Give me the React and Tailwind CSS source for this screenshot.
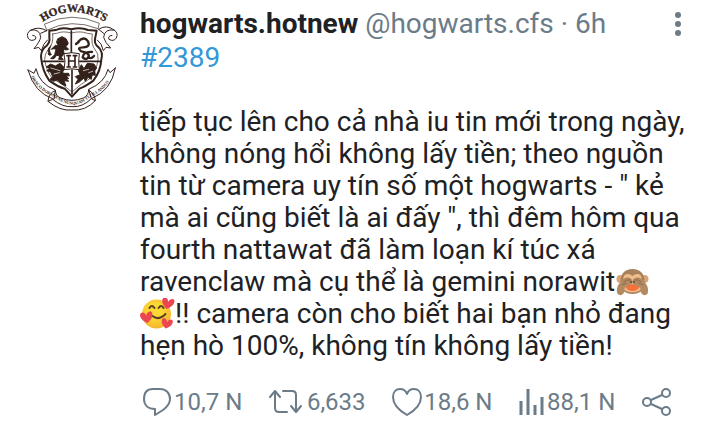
import React from 'react';

const Crest = () => (
  <svg
    viewBox="0 0 312 336"
    className="w-26 h-28 shrink-0"
    fill="none"
    stroke="#33221b"
    strokeWidth="3"
    strokeLinejoin="round"
    strokeLinecap="round"
    role="img"
    aria-label="Hogwarts crest"
  >
    <defs>
      <path id="crest-title" d="M68 66 Q155 6 256 66" />
      <path id="crest-motto" d="M33 230 Q52 270 100 290 Q128 312 156 314 Q186 314 212 290 Q264 268 284 214" />
    </defs>

    {/* name ribbon */}
    <text fill="#33221b" stroke="#33221b" strokeWidth="1" className="font-['Liberation_Serif',serif] text-[34px] font-bold">
      <textPath href="#crest-title">HOGWARTS</textPath>
    </text>
    <path d="M74 72 Q155 32 238 70 L234 86 Q154 54 82 90 Z" strokeWidth="2" />
    <path d="M80 92 Q56 78 33 90 Q18 98 24 114 Q32 126 46 118 Q52 108 38 106 M33 90 Q60 86 62 112 Q60 124 42 146 L56 142 L64 152 Q70 130 82 120 M62 100 L80 92" />
    <path d="M236 88 Q258 72 282 90 Q296 98 289 114 Q281 126 267 118 Q262 108 276 106 M282 90 Q253 86 251 112 Q254 126 272 144 L258 142 L250 152 Q246 130 232 120 M251 100 L236 88" />

    {/* shield */}
    <path d="M88 92 L108 90 Q126 80 154 88 Q182 80 204 90 L230 92 L226 112 Q220 130 236 142 Q250 156 244 178 Q242 214 220 242 Q196 260 178 266 L156 290 L134 266 Q112 260 88 242 Q68 214 64 178 Q60 156 74 142 Q92 130 88 112 Z" strokeWidth="6" />
    <path d="M98 102 L110 100 Q128 92 154 99 Q182 92 202 100 L217 102 Q212 134 226 150 Q236 160 234 178 Q230 212 211 235 Q184 250 156 276 Q126 250 97 235 Q78 212 74 178 Q74 160 84 150 Q102 130 98 102 Z" strokeWidth="2" />
    <path d="M154 93 V160 M156 210 V282 M69 184 H132 M178 184 H240" strokeWidth="5" />

    {/* lion */}
    <g fill="#33221b" strokeWidth="3">
      <path d="M114 116 L126 110 L138 116 L145 130 L138 140 L146 148 L137 150 L130 146 L132 160 L124 172 L130 178 L116 178 L119 168 L110 166 L102 176 L92 176 L104 164 L108 148 L102 146 L94 148 L106 136 L116 138 L110 128 Z" />
      <path d="M92 138 Q84 152 94 164 Q86 168 84 162 Q88 158 84 152 Q84 144 92 138 Z" />
    </g>
    {/* serpent */}
    <path d="M174 126 Q192 106 204 124 Q212 142 190 142 Q168 142 184 154 Q210 158 206 172 Q198 182 188 172 Q190 154 216 156 M168 132 L176 126 M204 172 Q214 178 222 168" strokeWidth="7" />
    {/* badger */}
    <g fill="#33221b" strokeWidth="3">
      <path d="M80 200 L92 192 L106 198 L120 190 L134 204 L128 216 L134 230 L146 244 L132 242 L138 258 L124 252 L112 240 L100 244 L90 238 L98 230 L92 216 L80 212 L88 206 Z" />
      <path d="M126 220 L146 220 L148 228 L138 226 L146 236 L134 234 Z" />
    </g>
    {/* eagle */}
    <g fill="#33221b" strokeWidth="3">
      <path d="M176 212 L184 194 L192 206 L202 190 L222 192 L230 204 L224 212 L226 226 L216 224 L214 238 L204 232 L196 244 L192 234 L178 246 L166 252 L174 238 L166 230 L180 224 Z" />
    </g>
    <path d="M92 204 L120 212 M102 222 L118 218 M190 212 L206 208 M206 218 L218 214" stroke="#fff" strokeWidth="2" />
    <path d="M132 161 Q156 155 178 161 Q174 184 178 209 Q156 204 132 209 Q138 184 132 161 Z" fill="#fff" />
    <path d="M141 167 H151 M146 167 V201 M141 201 H151 M160 167 H170 M165 167 V201 M160 201 H170 M146 183 H165" strokeWidth="5" />

    {/* motto ribbon */}
    <path d="M24 210 L42 220 L48 206 Q58 252 106 270 L102 298 Q42 278 24 210 Z M286 204 L270 218 L264 208 Q254 248 206 268 L214 296 Q274 272 286 204 Z" />
    <path d="M106 272 Q86 278 84 304 L98 298 Q128 322 156 320 Q188 322 214 296 L226 302 Q224 280 206 270 M106 272 Q108 290 122 294 Q156 308 190 294 Q206 286 206 270 M84 304 Q120 334 156 330 Q196 334 226 302" />
    <text fill="#33221b" stroke="none" className="font-['Liberation_Serif',serif] text-[13px] font-bold">
      <textPath href="#crest-motto">DRACO DORMIENS NUNQUAM TITILLANDUS</textPath>
    </text>
  </svg>
);

const MonkeyEmoji = () => (
  <svg viewBox="0 0 34 32" className="inline-block w-[35px] h-8 align-bottom" role="img" aria-label="see-no-evil monkey">
    <circle cx="5" cy="13" r="4" fill="#d9a577" />
    <circle cx="29" cy="13" r="4" fill="#d9a577" />
    <path d="M17 3 C9 3 5 8 5 15 C4 24 10 28 17 28 C24 28 30 24 29 15 C29 8 25 3 17 3 Z" fill="#a9825d" />
    <path d="M8 12 C8 7 14 7 17 10 C20 7 26 7 26 12 L27 21 C25 28 9 28 7 21 Z" fill="#f0bd8c" />
    <path d="M10 21 Q17 15 24 21 Q22 25 17 25 Q12 25 10 21 Z" fill="#f6713b" />
    <path d="M2 28 C0 22 3 17 8 13 C12 10 17 12 17 16 C17 19 12 20 9 22 C10 26 7 30 4 29 Z" fill="#b48a63" />
    <path d="M32 28 C34 22 31 17 26 13 C22 10 17 12 17 16 C17 19 22 20 25 22 C24 26 27 30 30 29 Z" fill="#b48a63" />
    <path d="M8 16 Q11 13 15 14 M6 19 L11 17 M26 16 Q23 13 19 14 M28 19 L23 17" stroke="#89674b" strokeWidth="1" fill="none" />
    <path d="M15 16 h1 M18 16 h1" stroke="#5d4335" strokeWidth="1.4" strokeLinecap="round" />
  </svg>
);

const HeartsEmoji = () => (
  <svg viewBox="0 0 34 32" className="inline-block w-[35px] h-8 align-bottom" role="img" aria-label="smiling face with hearts">
    <defs>
      <radialGradient id="face" cx="45%" cy="40%" r="60%">
        <stop offset="0.4" stopColor="#fdd835" />
        <stop offset="1" stopColor="#f5b52e" />
      </radialGradient>
      <path id="mini-heart" d="M0 5 C-9 -1 -6 -7 -3 -6 Q0 -5 0 -2 Q1 -6 5 -6 C8 -4 6 2 0 5 Z" fill="#ec4652" />
    </defs>
    <circle cx="16" cy="16" r="14.5" fill="url(#face)" />
    <path d="M9 10 Q11 6 14 10 M18 10 Q21 6 23 10" stroke="#5b4224" strokeWidth="2" fill="none" strokeLinecap="round" />
    <path d="M12 18 Q18 23 25 16" stroke="#5b4224" strokeWidth="2" fill="none" strokeLinecap="round" />
    <use href="#mini-heart" transform="translate(27 6) rotate(12)" />
    <use href="#mini-heart" transform="translate(6 20) rotate(-8)" />
    <use href="#mini-heart" transform="translate(26 26) scale(0.9) rotate(12)" />
  </svg>
);

const iconProps = {
  fill: 'none',
  stroke: 'currentColor',
  strokeWidth: 2,
  strokeLinecap: 'round',
  strokeLinejoin: 'round',
  'aria-hidden': true,
};

const ReplyIcon = () => (
  <svg viewBox="0 0 30 30" className="w-[30px] h-[30px]" {...iconProps}>
    <path d="M11 2 H18 C24 2 28 6 28 12 C28 17 25 20 21 23 L13 28 V22 C6 22 2 18 2 12 C2 6 5 2 11 2 Z" />
  </svg>
);

const RepostIcon = () => (
  <svg viewBox="2 0 36 30" className="w-9 h-[30px]" {...iconProps}>
    <path d="M3 10 L8 4 L13 10 M8 5 V21 Q8 25 12 25 H20 M16 4 H25 Q29 4 29 8 V24 M24 19 L29 25 L34 19" />
  </svg>
);

const LikeIcon = () => (
  <svg viewBox="0 0 30 30" className="w-[30px] h-[30px]" {...iconProps}>
    <path d="M15 28 C8 24 1 18 1 10 C1 5 4 2 8 2 C11 2 14 4 15 7 C16 4 19 2 22 2 C26 2 29 5 29 10 C29 18 22 24 15 28 Z" />
  </svg>
);

const ViewsIcon = () => (
  <svg viewBox="0 0 26 30" className="w-[26px] h-[30px]" {...iconProps} strokeWidth="3" strokeLinecap="butt">
    <path d="M2 14 V28 M9 2 V28 M16 18 V28 M23 10 V28" />
  </svg>
);

const ShareIcon = () => (
  <svg viewBox="0 0 30 30" className="w-[30px] h-[30px]" {...iconProps}>
    <circle cx="5" cy="15" r="4" />
    <circle cx="24" cy="6" r="4" />
    <circle cx="24" cy="24" r="4" />
    <path d="M9 13 L20 8 M9 17 L20 22" />
  </svg>
);

const stats = [
  { label: 'Reply', icon: ReplyIcon, value: '10,7 N' },
  { label: 'Repost', icon: RepostIcon, value: '6,633' },
  { label: 'Like', icon: LikeIcon, value: '18,6 N' },
  { label: 'Views', icon: ViewsIcon, value: '88,1 N' },
  { label: 'Share', icon: ShareIcon },
];

const App = () => {
  return (
    <article className="flex gap-4 pl-5 pr-8 min-h-screen bg-white font-[Roboto,sans-serif] text-[28px] leading-8 text-[#202124]">
      <Crest />

      <div className="flex-1 min-w-0 pt-2">
        <header className="flex items-center justify-between">
          <div className="whitespace-nowrap">
            <span className="font-bold">hogwarts.hotnew</span>{' '}
            <span className="text-[#6b7b88]">@hogwarts.cfs · 6h</span>
          </div>
          <button type="button" aria-label="More" className="px-1.5 text-[#6b7b88]">
            <svg viewBox="0 0 8 26" className="w-2 h-[26px]" fill="currentColor" aria-hidden="true">
              <circle cx="4" cy="4" r="3" />
              <circle cx="4" cy="13" r="3" />
              <circle cx="4" cy="22" r="3" />
            </svg>
          </button>
        </header>

        <a href="#2389" className="block mt-0.5 text-[#3298d8]">#2389</a>

        <p className="mt-8">
          tiếp tục lên cho cả nhà iu tin mới trong ngày, không nóng hổi không lấy tiền;
          theo nguồn tin từ camera uy tín số một hogwarts - " kẻ mà ai cũng biết là ai
          đấy ", thì đêm hôm qua fourth nattawat đã làm loạn kí túc xá ravenclaw mà cụ
          thể là gemini norawit<MonkeyEmoji />{' '}
          <HeartsEmoji />!! camera còn cho biết hai bạn nhỏ đang hẹn hò 100%, không tín
          không lấy tiền!
        </p>

        <footer className="flex justify-between mt-6 pl-0.5 pr-4 text-2xl leading-8 text-[#6b7b88]">
          {stats.map(({ label, icon: Icon, value }) => (
            <button key={label} type="button" aria-label={label} className="flex items-center gap-0.5 whitespace-nowrap">
              <Icon />
              {value && <span>{value}</span>}
            </button>
          ))}
        </footer>
      </div>
    </article>
  );
};

export default App;
